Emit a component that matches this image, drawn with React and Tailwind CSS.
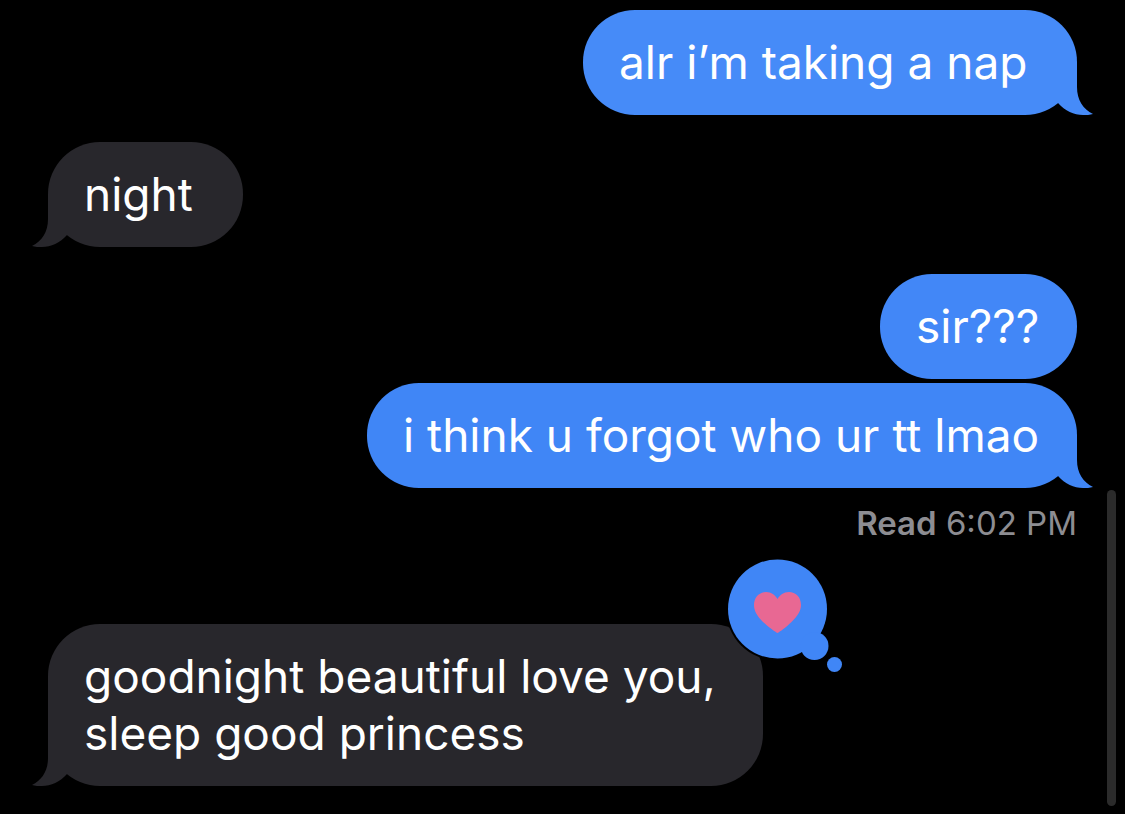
import clsx from 'clsx'

const messages = [
  { id: 1, from: 'me', text: 'alr i’m taking a nap', tail: true, color: 'bg-[#468bf8] text-[#468bf8]', size: 'min-w-[494px]', space: '' },
  { id: 2, from: 'them', text: 'night', tail: true, size: 'min-w-[195px]', space: 'mt-[27px]' },
  { id: 3, from: 'me', text: 'sir???', color: 'bg-[#4287f7] text-[#4287f7]', size: 'min-w-[197px]', space: 'mt-[27px]' },
  { id: 4, from: 'me', text: 'i think u forgot who ur tt lmao', tail: true, color: 'bg-[#4086f6] text-[#4086f6]', size: 'min-w-[710px]', space: 'mt-1', read: '6:02 PM' },
  { id: 5, from: 'them', text: 'goodnight beautiful love you,\nsleep good princess', tail: true, size: 'min-w-[715px]', space: 'mt-[82px]', loved: true },
]

function Tail({ mine }) {
  return (
    <svg
      viewBox="0 0 40 52"
      className={clsx('absolute bottom-0 w-10 h-[52px]', mine ? '-right-4' : '-left-4 -scale-x-100')}
      fill="currentColor"
      aria-hidden="true"
    >
      <path d="M24 0V24C24 37 30 46 40 51C37 52 33 52 30 52C21 52 12 48 5 40L0 36V0Z" />
    </svg>
  )
}

function Tapback() {
  return (
    <svg
      viewBox="0 0 120 120"
      className="absolute -top-[67px] -right-[82px] w-[120px] h-[120px]"
      role="img"
      aria-label="Loved"
    >
      <circle cx="52.5" cy="52" r="51.5" fill="#000" />
      <g fill="#4086f6">
        <circle cx="52.5" cy="52" r="49.5" />
        <circle cx="89.5" cy="89" r="14" />
        <circle cx="109.5" cy="107.5" r="7.5" />
      </g>
      <path
        fill="#e86893"
        d="M52.5 76C50.500 75 43.500 70 38 65C32 59 29 54 29 48C29 40 34.500 35 41 35C46.500 35 50 38 52.500 42C55 38 58.500 35 64 35C70.500 35 76 40 76 48C76 54 72.500 59 66.500 65C61.500 70 54.500 75 52.500 76Z"
      />
    </svg>
  )
}

function Bubble({ message }) {
  const mine = message.from === 'me'
  return (
    <div
      className={clsx(
        'relative rounded-[52px] pl-9 pr-6 py-6',
        message.size,
        mine ? message.color : 'bg-[#28272c] text-[#28272c]'
      )}
    >
      {message.tail && <Tail mine={mine} />}
      <p className="relative text-white text-[46px] leading-[57px] whitespace-pre">{message.text}</p>
      {message.loved && <Tapback />}
    </div>
  )
}

export default function App() {
  return (
    <main className="relative min-h-screen bg-black overflow-hidden px-12 pt-[10px] pb-6 font-['Inter',sans-serif]">
      <ul className="flex flex-col">
        {messages.map(m => (
          <li key={m.id} className={clsx('flex flex-col', m.from === 'me' ? 'items-end' : 'items-start', m.space)}>
            <Bubble message={m} />
            {m.read && (
              <p className="mt-4 text-[33px] leading-[38px] text-[#8d8d92]">
                <span className="font-semibold">Read</span> {m.read}
              </p>
            )}
          </li>
        ))}
      </ul>

      {/* Scroll indicator */}
      <div className="absolute right-[9px] bottom-2 w-[9px] h-[316px] rounded-full bg-[#2b2b2b]" />
    </main>
  )
}
